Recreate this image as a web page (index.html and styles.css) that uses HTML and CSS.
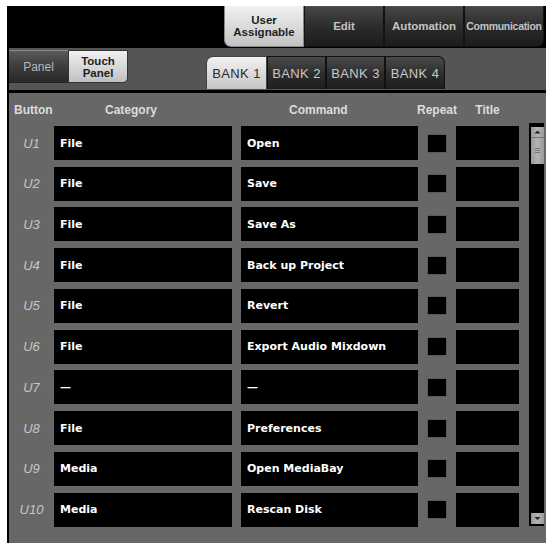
FILE: index.html
```html
<!DOCTYPE html>
<html>
<head>
<meta charset="utf-8">
<title>Touch Panel – User Assignable</title>
<link rel="stylesheet" href="styles.css">
</head>
<body>
<div class="frame">
  <div class="topbar">
    <div class="tab tab-on"><span class="ln">User</span><span class="ln">Assignable</span></div>
    <div class="tab">Edit</div>
    <div class="tab">Automation</div>
    <div class="tab tab-last">Communication</div>
  </div>

  <div class="subbar">
    <div class="seg">
      <div class="seg-btn">Panel</div>
      <div class="seg-btn seg-on"><span class="ln">Touch</span><span class="ln">Panel</span></div>
    </div>
    <div class="banks">
      <div class="bank bank-on">BANK 1</div>
      <div class="bank">BANK 2</div>
      <div class="bank">BANK 3</div>
      <div class="bank bank-last">BANK 4</div>
    </div>
  </div>

  <div class="grid">
    <div class="rows">
      <div class="head">
        <div class="h-btn">Button</div>
        <div class="h-cat">Category</div>
        <div class="h-cmd">Command</div>
        <div class="h-rep">Repeat</div>
        <div class="h-title">Title</div>
      </div>

      <div class="row"><div class="lbl">U1</div><div class="box cat">File</div><div class="box cmd">Open</div><div class="rep"><span class="chk"></span></div><div class="box ttl"></div></div>
      <div class="row"><div class="lbl">U2</div><div class="box cat">File</div><div class="box cmd">Save</div><div class="rep"><span class="chk"></span></div><div class="box ttl"></div></div>
      <div class="row"><div class="lbl">U3</div><div class="box cat">File</div><div class="box cmd">Save As</div><div class="rep"><span class="chk"></span></div><div class="box ttl"></div></div>
      <div class="row"><div class="lbl">U4</div><div class="box cat">File</div><div class="box cmd">Back up Project</div><div class="rep"><span class="chk"></span></div><div class="box ttl"></div></div>
      <div class="row"><div class="lbl">U5</div><div class="box cat">File</div><div class="box cmd">Revert</div><div class="rep"><span class="chk"></span></div><div class="box ttl"></div></div>
      <div class="row"><div class="lbl">U6</div><div class="box cat">File</div><div class="box cmd">Export Audio Mixdown</div><div class="rep"><span class="chk"></span></div><div class="box ttl"></div></div>
      <div class="row"><div class="lbl">U7</div><div class="box cat">—</div><div class="box cmd">—</div><div class="rep"><span class="chk"></span></div><div class="box ttl"></div></div>
      <div class="row"><div class="lbl">U8</div><div class="box cat">File</div><div class="box cmd">Preferences</div><div class="rep"><span class="chk"></span></div><div class="box ttl"></div></div>
      <div class="row"><div class="lbl">U9</div><div class="box cat">Media</div><div class="box cmd">Open MediaBay</div><div class="rep"><span class="chk"></span></div><div class="box ttl"></div></div>
      <div class="row"><div class="lbl">U10</div><div class="box cat">Media</div><div class="box cmd">Rescan Disk</div><div class="rep"><span class="chk"></span></div><div class="box ttl"></div></div>
    </div>

    <div class="scroll">
      <div class="sb-up">
        <svg width="13" height="10" viewBox="0 0 13 10"><path d="M3.5 6.5 L6.5 3.5 L9.5 6.5 Z" fill="#222"/></svg>
      </div>
      <div class="sb-thumb">
        <svg width="13" height="26" viewBox="0 0 13 26"><path d="M4 10.5h5M4 12.5h5M4 14.5h5" stroke="#777" stroke-width="1"/></svg>
      </div>
      <div class="sb-space"></div>
      <div class="sb-down">
        <svg width="13" height="11" viewBox="0 0 13 11"><path d="M3.5 4 L6.5 7 L9.5 4 Z" fill="#222"/></svg>
      </div>
    </div>
  </div>
</div>
</body>
</html>
```

FILE: styles.css
```css
html, body {
  margin: 0;
  padding: 0;
  background: #fff;
}

body {
  font-family: "Liberation Sans", Arial, sans-serif;
}

.frame {
  margin: 6px 0 0 7px;
  width: 539px;
  height: 537px;
  background: #000;
  padding-left: 2px;
  box-sizing: border-box;
  display: flex;
  flex-direction: column;
  overflow: hidden;
}

/* two-line captions on tabs and buttons */
.ln {
  display: block;
  line-height: 12px;
  height: 12px;
}

/* ---- top mode tabs ---- */
.topbar {
  height: 42px;
  display: flex;
  justify-content: flex-end;
  padding-right: 2px;
  flex: none;
}

.tab {
  width: 80px;
  height: 41px;
  box-sizing: border-box;
  border: 1px solid #111;
  border-top: none;
  background: linear-gradient(#474747, #2a2a2a 55%, #1c1c1c);
  color: #c4c4c4;
  font-weight: bold;
  font-size: 11.5px;
  display: flex;
  flex-direction: column;
  align-items: center;
  justify-content: center;
  text-align: center;
  box-shadow: inset 0 1px 0 rgba(255,255,255,0.08);
}

.tab-on {
  background: linear-gradient(#f2f2f2, #d6d6d6 60%, #c2c2c2);
  color: #1e1e1e;
  font-size: 11.5px;
  border-bottom-left-radius: 7px;
  border-color: #888;
}

.tab-last {
  border-bottom-right-radius: 7px;
  font-size: 10.5px;
  letter-spacing: -0.3px;
}

/* ---- panel switch and bank tabs ---- */
.subbar {
  height: 42px;
  flex: none;
  background: #555;
  display: flex;
  margin-bottom: 3px;
}

.seg {
  display: flex;
  margin-top: 2px;
  height: 33px;
}

.seg-btn {
  box-sizing: border-box;
  display: flex;
  flex-direction: column;
  align-items: center;
  justify-content: center;
  text-align: center;
  font-size: 12px;
}

.seg-btn:first-child {
  width: 59px;
  background: linear-gradient(#5a5a5a, #3c3c3c 50%, #2a2a2a);
  color: #b8b8b8;
  border-top: 1px solid #8a8a8a;
  border-bottom: 1px solid #222;
}

.seg-on {
  width: 60px;
  background: linear-gradient(#f0f0f0, #d4d4d4 60%, #c0c0c0);
  color: #1e1e1e;
  font-weight: bold;
  font-size: 11.5px;
  border: 1px solid #333;
  border-bottom-right-radius: 5px;
}

.banks {
  display: flex;
  align-self: flex-end;
  margin-left: 78px;
  margin-bottom: 1px;
  height: 33px;
}

.bank {
  width: 59px;
  box-sizing: border-box;
  border: 1px solid #111;
  border-bottom: none;
  background: linear-gradient(#4a4a4a, #2c2c2c 55%, #1e1e1e);
  color: #c8c8c8;
  font-size: 13px;
  letter-spacing: 0.4px;
  display: flex;
  align-items: center;
  justify-content: center;
  white-space: nowrap;
}

.bank-on {
  width: 61px;
  background: linear-gradient(#f2f2f2, #d8d8d8 60%, #c4c4c4);
  color: #2a2a2a;
  border-color: #444;
  border-top-left-radius: 7px;
}

.bank-last {
  width: 60px;
  border-top-right-radius: 7px;
}

/* ---- assignment table ---- */
.grid {
  flex: 1;
  background: #676767;
  display: flex;
}

.rows {
  width: 520px;
  flex: none;
}

.head {
  height: 33px;
  display: flex;
  align-items: center;
  color: #dcdcdc;
  font-weight: bold;
  font-size: 12px;
  white-space: nowrap;
}

.h-btn { width: 45px; box-sizing: border-box; padding-left: 5px; }
.h-cat { width: 178px; box-sizing: border-box; padding-left: 51px; }
.h-cmd { width: 177px; margin-left: 9px; box-sizing: border-box; padding-left: 48px; }
.h-rep { width: 38px; display: flex; justify-content: center; }
.h-title { width: 63px; text-align: center; }

.row {
  height: 34px;
  display: flex;
  margin-bottom: 6.74px;
}

.lbl {
  width: 45px;
  display: flex;
  align-items: center;
  justify-content: center;
  font-style: italic;
  font-size: 13px;
  color: #c6c6c6;
}

.box {
  background: #000;
  color: #fff;
  font-family: "DejaVu Sans", Verdana, sans-serif;
  font-weight: bold;
  font-size: 11px;
  display: flex;
  align-items: center;
  padding-left: 6px;
  box-sizing: border-box;
  white-space: nowrap;
}

.cat { width: 178px; }
.cmd { width: 177px; margin-left: 9px; }
.ttl { width: 63px; }

.rep {
  width: 38px;
  display: flex;
  align-items: center;
  justify-content: center;
}

.chk {
  width: 18px;
  height: 17px;
  background: #000;
  box-shadow: 0 0 0 1px #5a5a5a;
}

/* ---- scrollbar ---- */
.scroll {
  width: 15px;
  margin-top: 30px;
  height: 403px;
  background: #000;
  display: flex;
  flex-direction: column;
  align-items: flex-end;
  box-sizing: border-box;
  padding: 4px 0 2px 0;
}

.sb-up, .sb-thumb, .sb-down {
  width: 13px;
  background: linear-gradient(90deg, #9a9a9a, #b4b4b4 50%, #9a9a9a);
  display: flex;
}

.sb-up { height: 10px; border-bottom: 1px solid #777; }
.sb-thumb { height: 26px; }
.sb-space { flex: 1; }
.sb-down { height: 11px; }
```
